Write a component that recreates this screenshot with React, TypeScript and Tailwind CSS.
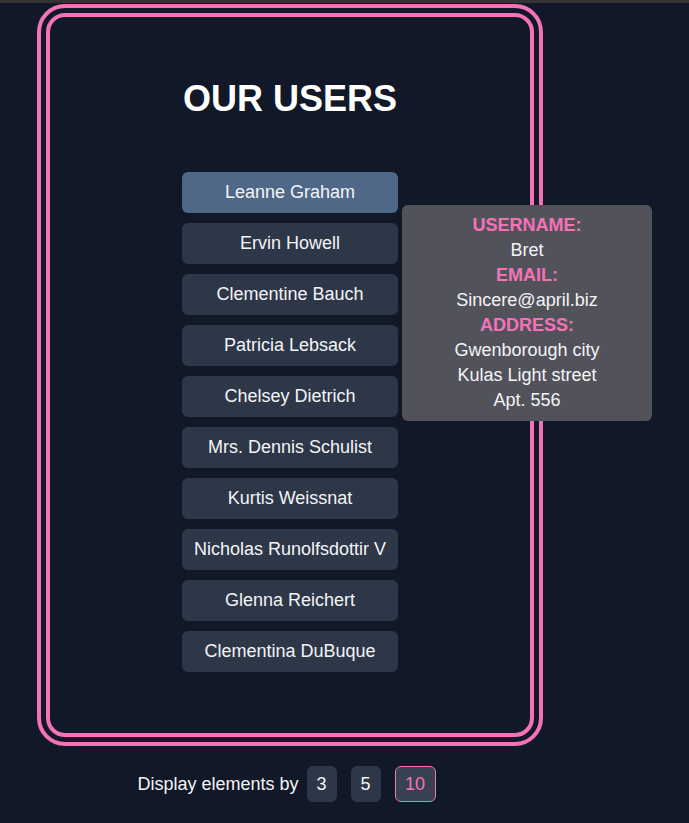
import { useState } from "react";

const users = [
  { name: "Leanne Graham", username: "Bret", email: "Sincere@april.biz", city: "Gwenborough", street: "Kulas Light", suite: "Apt. 556" },
  { name: "Ervin Howell", username: "Antonette", email: "Shanna@melissa.tv", city: "Wisokyburgh", street: "Victor Plains", suite: "Suite 879" },
  { name: "Clementine Bauch", username: "Samantha", email: "Nathan@yesenia.net", city: "McKenziehaven", street: "Douglas Extension", suite: "Suite 847" },
  { name: "Patricia Lebsack", username: "Karianne", email: "Julianne.OConner@kory.org", city: "South Elvis", street: "Hoeger Mall", suite: "Apt. 692" },
  { name: "Chelsey Dietrich", username: "Kamren", email: "Lucio_Hettinger@annie.ca", city: "Roscoeview", street: "Skiles Walks", suite: "Suite 351" },
  { name: "Mrs. Dennis Schulist", username: "Leopoldo_Corkery", email: "Karley_Dach@jasper.info", city: "South Christy", street: "Norberto Crossing", suite: "Apt. 950" },
  { name: "Kurtis Weissnat", username: "Elwyn.Skiles", email: "Telly.Hoeger@billy.biz", city: "Howemouth", street: "Rex Trail", suite: "Suite 280" },
  { name: "Nicholas Runolfsdottir V", username: "Maxime_Nienow", email: "Sherwood@rosamond.me", city: "Aliyaview", street: "Ellsworth Summit", suite: "Suite 729" },
  { name: "Glenna Reichert", username: "Delphine", email: "Chaim_McDermott@dana.io", city: "Bartholomebury", street: "Dayna Park", suite: "Suite 449" },
  { name: "Clementina DuBuque", username: "Moriah.Stanton", email: "Rey.Padberg@karina.biz", city: "Lebsackbury", street: "Kattie Turnpike", suite: "Suite 198" },
];

export default function App() {
  const [active, setActive] = useState(0);
  const [perPage, setPerPage] = useState(10);

  return (
    <div className="min-h-screen bg-[#111827] text-[#f3f4f6] font-['Liberation_Sans',Arial,sans-serif]">
      <div className="h-[3px] bg-[#333333]"></div>
      <div className="w-[506px] ml-[37px] pt-[1px]">
        <div className="border-[13px] border-double border-[#f472b6] rounded-[28px] pt-[62px] pb-[61px] flex flex-col items-center">
          <h1 className="text-[36px] leading-[40px] font-bold text-white mb-[53px]">OUR USERS</h1>
          <ul className="flex flex-col gap-[10px]">
            {users.slice(0, perPage).map((u, i) => (
              <li key={u.name} className="relative">
                <button
                  onMouseEnter={() => setActive(i)}
                  className={`w-[216px] h-[41px] rounded-md text-[18px] text-[#f3f4f6] ${i === active ? "bg-[#4f6887]" : "bg-[#2d3748]"}`}
                >
                  {u.name}
                </button>
                {i === active && (
                  <div className="absolute left-[220px] top-[33px] z-10 w-[250px] rounded-md bg-[#52525b] py-[8px] text-center text-[18px] leading-[25px] text-[#f3f4f6]">
                    <p className="font-bold text-[#f472b6]">USERNAME:</p>
                    <p>{u.username}</p>
                    <p className="font-bold text-[#f472b6]">EMAIL:</p>
                    <p>{u.email}</p>
                    <p className="font-bold text-[#f472b6]">ADDRESS:</p>
                    <p>{u.city} city</p>
                    <p>{u.street} street</p>
                    <p>{u.suite}</p>
                  </div>
                )}
              </li>
            ))}
          </ul>
        </div>
        <div className="mt-[20px] flex items-center justify-center text-[18px]">
          <span className="mr-[1px] text-[#f3f4f6]">Display elements by</span>
          {[3, 5, 10].map((n) => (
            <button
              key={n}
              onClick={() => setPerPage(n)}
              className={`mx-[7px] h-[36px] rounded-md ${n === perPage ? "w-[41px] border border-[#f472b6] bg-[#374151] text-[#f472b6]" : "w-[30px] bg-[#2d3748] text-[#f3f4f6]"}`}
            >
              {n}
            </button>
          ))}
        </div>
      </div>
    </div>
  );
}
